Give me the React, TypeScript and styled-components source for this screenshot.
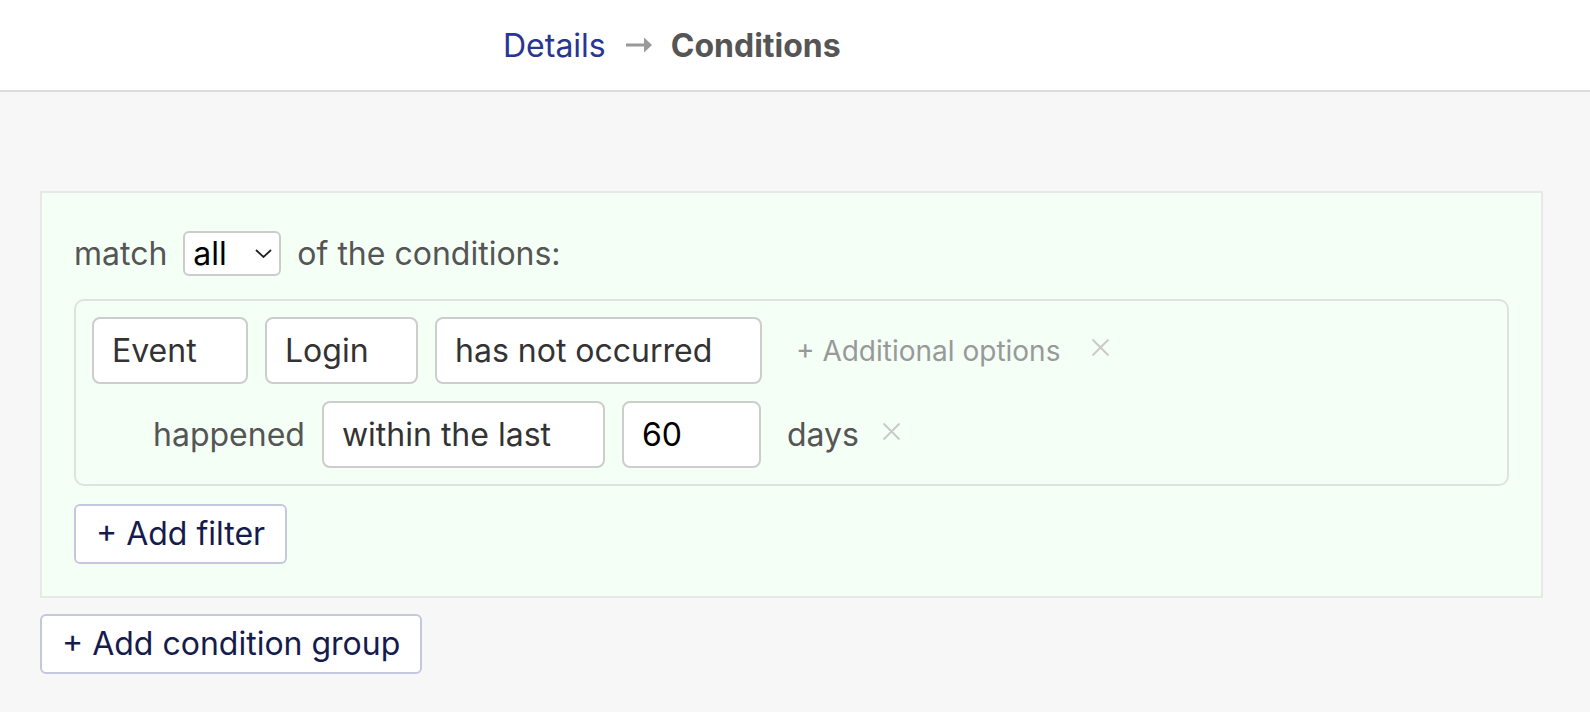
import React from "react";
import styled, { createGlobalStyle } from "styled-components";

const GlobalStyle = createGlobalStyle`
  body {
    margin: 0;
    background: #f7f7f7;
    font-family: Inter, "Noto Sans", sans-serif;
  }
`;

function RemoveIcon() {
  return (
    <svg width="19" height="19" viewBox="0 0 19 19">
      <path d="M1.5 1.5 L17.5 17.5 M17.5 1.5 L1.5 17.5" stroke="#c9c9c9" strokeWidth="1.8" fill="none" />
    </svg>
  );
}

function Chevron() {
  return (
    <svg width="17" height="9" viewBox="0 0 17 9">
      <path d="M1 1 L8.5 8 L16 1" stroke="#222" strokeWidth="1.8" fill="none" />
    </svg>
  );
}

function ArrowRight() {
  return (
    <svg width="26" height="16" viewBox="0 0 26 16">
      <rect x="0" y="6.5" width="19" height="3" fill="#999999" />
      <path d="M18 0.5 L26 8 L18 15.5 Z" fill="#999999" />
    </svg>
  );
}

function App() {
  return (
    <>
      <GlobalStyle />
      <Header>
        <Crumb>Details</Crumb>
        <CrumbArrow>
          <ArrowRight />
        </CrumbArrow>
        <CrumbCurrent>Conditions</CrumbCurrent>
      </Header>

      <Content>
        <GroupPanel>
          {/* match selector */}
          <MatchRow>
            <span>match</span>
            <SelectBox>
              <span>all</span>
              <Chevron />
            </SelectBox>
            <span>of the conditions:</span>
          </MatchRow>

          {/* filter */}
          <FilterBox>
            <FilterRow>
              <Field $width={156}>Event</Field>
              <Field $width={153}>Login</Field>
              <Field $width={327}>has not occurred</Field>
              <AddOptions>+ Additional options</AddOptions>
              <RemoveButton $ml={14}>
                <RemoveIcon />
              </RemoveButton>
            </FilterRow>
            <FilterRow $indent={61}>
              <Label>happened</Label>
              <Field $width={283}>within the last</Field>
              <Field $width={139} $input>
                60
              </Field>
              <Label $ml={9}>days</Label>
              <RemoveButton $ml={6}>
                <RemoveIcon />
              </RemoveButton>
            </FilterRow>
          </FilterBox>

          <OutlineButton>+ Add filter</OutlineButton>
        </GroupPanel>

        <OutlineButton>+ Add condition group</OutlineButton>
      </Content>
    </>
  );
}

export default App;

const Header = styled.div`
  display: flex;
  align-items: center;
  height: 90px;
  padding-left: 503px;
  background: #ffffff;
  border-bottom: 2px solid #dcdcdc;
  font-size: 32px;
`;

const Crumb = styled.span`
  color: #283593;
`;

const CrumbArrow = styled.span`
  display: flex;
  margin: 0 19px 0 20px;
`;

const CrumbCurrent = styled.span`
  color: #555555;
  font-weight: 700;
`;

const Content = styled.div`
  display: flex;
  flex-direction: column;
  align-items: flex-start;
  gap: 16px;
  padding: 99px 47px 40px 40px;
`;

const GroupPanel = styled.div`
  align-self: stretch;
  display: flex;
  flex-direction: column;
  align-items: flex-start;
  padding: 38px 32px 32px;
  background: #f4fff6;
  border: 2px solid #e8e8e8;
`;

const MatchRow = styled.div`
  display: flex;
  align-items: center;
  gap: 16px;
  margin-bottom: 23px;
  color: #555555;
  font-size: 32px;
`;

const SelectBox = styled.div`
  display: flex;
  align-items: center;
  justify-content: space-between;
  box-sizing: border-box;
  width: 98px;
  height: 45px;
  padding: 0 7px 0 8px;
  background: #ffffff;
  border: 2px solid #cccccc;
  border-radius: 6px;
  color: #000000;
`;

const FilterBox = styled.div`
  align-self: stretch;
  display: flex;
  flex-direction: column;
  gap: 17px;
  padding: 16px;
  border: 2px solid #dfe3df;
  border-radius: 10px;
  margin-bottom: 18px;
`;

const FilterRow = styled.div<{ $indent?: number }>`
  display: flex;
  align-items: center;
  gap: 17px;
  padding-left: ${(p) => p.$indent || 0}px;
`;

const Field = styled.div<{ $width: number; $input?: boolean }>`
  display: flex;
  align-items: center;
  box-sizing: border-box;
  width: ${(p) => p.$width}px;
  height: 67px;
  padding: 0 18px;
  background: #ffffff;
  border: 2px solid #cdcdcd;
  border-radius: 8px;
  color: ${(p) => (p.$input ? "#000000" : "#333333")};
  font-size: 32px;
`;

const Label = styled.span<{ $ml?: number }>`
  margin-left: ${(p) => p.$ml || 0}px;
  color: #555555;
  font-size: 32px;
`;

const AddOptions = styled.span`
  margin-left: 17px;
  color: #999999;
  font-size: 28px;
  cursor: pointer;
`;

const RemoveButton = styled.span<{ $ml?: number }>`
  display: flex;
  margin-left: ${(p) => p.$ml || 0}px;
  margin-bottom: 7px;
  cursor: pointer;
`;

const OutlineButton = styled.button`
  padding: 9px 20px;
  background: #ffffff;
  border: 2px solid #c5c7de;
  border-radius: 6px;
  color: #161b4d;
  font-family: Inter, "Noto Sans", sans-serif;
  font-size: 32px;
  line-height: 38px;
  cursor: pointer;
`;
